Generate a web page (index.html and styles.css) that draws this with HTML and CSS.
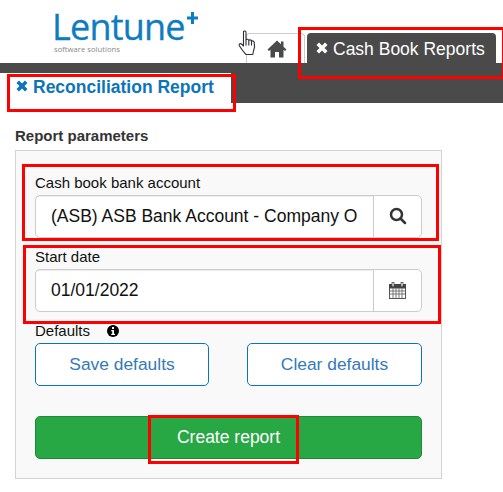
FILE: index.html
```html
<!DOCTYPE html>
<html lang="en">
<head>
    <meta charset="UTF-8">
    <title>Reconciliation Report</title>
    <link rel="stylesheet" href="styles.css">
</head>
<body>
    <!-- Logo and top tabs -->
    <div class="top">
        <div class="logo">
            <div class="logo-name">Lentune<svg class="logo-plus" viewBox="0 0 11 12"><path d="M4 0 H7 V4.500 H11 V7.500 H7 V12 H4 V7.500 H0 V4.500 H4 Z"/></svg></div>
            <div class="logo-sub">software solutions</div>
        </div>
        <div class="tab home-tab">
            <svg class="home-icon" viewBox="0 0 20 18"><path d="M10 0.5 L0.5 9.5 L2 11 L3.5 9.8 V17.5 H8 V12 H12 V17.5 H16.500 V9.800 L18 11 L19.500 9.500 L16.500 6.700 V1.500 H14 V4.300 Z"/></svg>
        </div>
        <div class="tab cash-tab">
            <svg class="x-icon" viewBox="0 0 12 12"><path d="M3 0.500 L6 3.500 L9 0.500 L11.500 3 L8.500 6 L11.500 9 L9 11.500 L6 8.500 L3 11.500 L0.500 9 L3.500 6 L0.500 3 Z"/></svg>
            Cash Book Reports
        </div>
    </div>

    <div class="band">
        <div class="subtab">
            <svg class="x-icon" viewBox="0 0 12 12"><path d="M3 0.500 L6 3.500 L9 0.500 L11.500 3 L8.500 6 L11.500 9 L9 11.500 L6 8.500 L3 11.500 L0.500 9 L3.500 6 L0.500 3 Z"/></svg>
            Reconciliation Report
        </div>
    </div>

    <div class="content">
        <div class="section-title">Report parameters</div>

        <div class="panel">
            <label class="field-label">Cash book bank account</label>
            <div class="input-group">
                <div class="input-text">(ASB) ASB Bank Account - Company O</div>
                <div class="input-btn">
                    <svg class="search-icon" viewBox="0 0 18 18"><circle cx="7.500" cy="7.500" r="5.500"/><path d="M11.500 11.500 L16 16"/></svg>
                </div>
            </div>

            <label class="field-label">Start date</label>
            <div class="input-group">
                <div class="input-text">01/01/2022</div>
                <div class="input-btn">
                    <svg class="cal-icon" viewBox="0 0 17 17">
                        <rect x="0.500" y="2.500" width="16" height="14" fill="#fff" stroke="#555"/>
                        <rect x="0.500" y="2.500" width="16" height="3.500" fill="#444" stroke="#444"/>
                        <path d="M4 6 V16 M7 6 V16 M10 6 V16 M13 6 V16 M1 9 H16 M1 12 H16" stroke="#777" fill="none"/>
                        <rect x="3" y="0.500" width="2" height="4" fill="#eee" stroke="#444" stroke-width="0.700"/>
                        <rect x="12" y="0.500" width="2" height="4" fill="#eee" stroke="#444" stroke-width="0.700"/>
                    </svg>
                </div>
            </div>

            <label class="field-label">Defaults
                <svg class="info-icon" viewBox="0 0 12 12"><circle cx="6" cy="6" r="6"/><rect x="5" y="2" width="2" height="2" fill="#fff"/><path d="M4.200 5 H7 V8.800 H8 V10 H4.200 V8.800 H5.200 V6.200 H4.200 Z" fill="#fff"/></svg>
            </label>
            <div class="default-buttons">
                <button class="btn-outline">Save defaults</button>
                <button class="btn-outline">Clear defaults</button>
            </div>

            <button class="btn-create">Create report</button>
        </div>
    </div>

    <!-- Red annotation boxes drawn over the screenshot -->
    <div class="mark mark-tab"></div>
    <div class="mark mark-subtab"></div>
    <div class="mark mark-account"></div>
    <div class="mark mark-date"></div>
    <div class="mark mark-create"></div>

    <!-- Mouse pointer -->
    <svg class="cursor" viewBox="0 0 20 26"><path d="M5.500 1.500 C6.500 0.500 8 1 8 2.500 V10 C8.500 9 10.500 9 10.800 10.500 C11.500 9.500 13.300 9.700 13.500 11.200 C14.500 10.500 16 11 16.200 12.500 C16.800 15 16.800 18 15.500 21 L14.800 24.500 H8 C5.500 22 3.800 19.500 1.500 16 C0.500 14.500 2 12.800 3.500 14 L5.500 16 Z M8 10 V15.500 M10.800 10.500 V15.500 M13.500 11.200 V15.500" fill="#fff" stroke="#2d2d3a" stroke-width="1.100" stroke-linejoin="round"/></svg>
</body>
</html>
```

FILE: styles.css
```css
body {
    font-family: "Liberation Sans", Arial, sans-serif;
    margin: 0;
    background: #fff;
    color: #111;
    overflow: hidden;
}
.top {
    display: flex;
    align-items: flex-end;
    height: 63px;
}
.logo {
    width: 246px;
    height: 63px;
    box-sizing: border-box;
    padding: 8px 0 0 52px;
    color: #0e7cc0;
}
.logo-name {
    display: flex;
    font-family: "Open Sans", sans-serif;
    font-size: 36px;
    line-height: 37px;
    letter-spacing: -0.8px;
    -webkit-text-stroke: 0.3px #0e7cc0;
    white-space: nowrap;
}
.logo-plus {
    width: 11px;
    height: 12px;
    margin: 4px 0 0 2px;
    fill: #0e7cc0;
}
.logo-sub {
    font-family: "Open Sans", sans-serif;
    font-size: 7.700px;
    line-height: 9px;
    color: #8a8a8a;
    padding-left: 2px;
}
.tab {
    height: 30px;
    box-sizing: border-box;
    border-radius: 4px 4px 0 0;
    display: flex;
    align-items: center;
}
.home-tab {
    width: 59px;
    border: 1px solid #ccc;
    border-bottom: none;
    justify-content: center;
    padding-left: 2px;
}
.home-icon {
    width: 20px;
    height: 18px;
    fill: #4a4a4a;
}
.cash-tab {
    margin-left: 2px;
    width: 189px;
    padding: 3px 0 0 9px;
    background: #4a4a4a;
    color: #fff;
    font-size: 17.500px;
    gap: 5px;
}
.x-icon {
    width: 12px;
    height: 12px;
    fill: currentColor;
    margin-top: -3px;
}
.band {
    height: 40px;
    box-sizing: border-box;
    padding-top: 10px;
    background: #4a4a4a;
}
.subtab {
    width: 231px;
    height: 30px;
    box-sizing: border-box;
    padding: 0 0 2px 16px;
    background: #fff;
    color: #0c74bb;
    font-size: 17.500px;
    font-weight: bold;
    display: flex;
    align-items: center;
    gap: 5px;
}
.content {
    padding: 0 15px;
}
.section-title {
    font-size: 15px;
    font-weight: bold;
    color: #333;
    line-height: 20px;
    margin-top: 23px;
    margin-bottom: 4px;
}
.panel {
    width: 427px;
    box-sizing: border-box;
    border: 1px solid #d3d3d3;
    background: #f9f9f9;
    padding: 22px 19px 19px;
}
.field-label {
    display: block;
    font-size: 15px;
    line-height: 20px;
    margin-bottom: 2px;
}
.input-group {
    display: flex;
    height: 42.5px;
    box-sizing: border-box;
    background: #fff;
    border: 1px solid #ccc;
    border-radius: 5px;
    margin-bottom: 9.5px;
}
.input-text {
    flex: 1;
    padding-left: 15px;
    font-size: 17.500px;
    line-height: 40px;
    white-space: nowrap;
    overflow: hidden;
    box-shadow: inset 0 1px 1px rgba(0, 0, 0, 0.075);
}
.input-btn {
    width: 48px;
    box-sizing: border-box;
    border-left: 1px solid #ccc;
    display: flex;
    align-items: center;
    justify-content: center;
}
.search-icon {
    width: 18px;
    height: 18px;
    fill: none;
    stroke: #333;
    stroke-width: 2.500;
    stroke-linecap: round;
}
.cal-icon {
    width: 17px;
    height: 17px;
}
.info-icon {
    width: 12px;
    height: 12px;
    margin-left: 13px;
    vertical-align: -1px;
}
.default-buttons {
    display: flex;
    justify-content: space-between;
    margin-bottom: 30.500px;
}
.btn-outline {
    font-family: inherit;
    width: 174px;
    height: 42.500px;
    font-size: 17.400px;
    background: #fff;
    color: #337ab7;
    border: 1px solid #0c74bb;
    border-radius: 5px;
}
.default-buttons .btn-outline:last-child {
    width: 175px;
}
.btn-create {
    display: block;
    font-family: inherit;
    width: 100%;
    height: 43px;
    font-size: 17.500px;
    background: #28a745;
    color: #fff;
    border: 1px solid #218838;
    border-radius: 5px;
}
.mark {
    position: absolute;
    box-sizing: border-box;
    border: 3px solid #f00;
}
.mark-tab {
    left: 298px;
    top: 27px;
    width: 207px;
    height: 52px;
}
.mark-subtab {
    left: 7px;
    top: 74px;
    width: 229px;
    height: 38px;
}
.mark-account {
    left: 22px;
    top: 164px;
    width: 417px;
    height: 77px;
}
.mark-date {
    left: 23px;
    top: 245px;
    width: 418px;
    height: 79px;
}
.mark-create {
    left: 148px;
    top: 415px;
    width: 151px;
    height: 49px;
}
.cursor {
    position: absolute;
    left: 238px;
    top: 30px;
    width: 20px;
    height: 26px;
}
```
